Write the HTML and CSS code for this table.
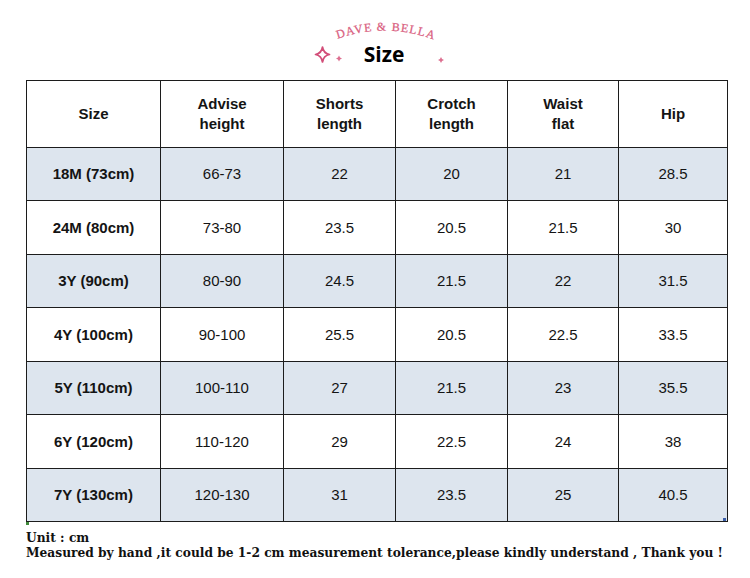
FILE: index.html
```
<!DOCTYPE html>
<html lang="en">
<head>
<meta charset="utf-8">
<title>Size chart</title>
<link rel="stylesheet" href="styles.css">
</head>
<body>
<div class="page">
  <header class="header">
    <svg class="logo" width="150" height="80" viewBox="0 0 150 80" xmlns="http://www.w3.org/2000/svg">
      <defs>
        <path id="arc" d="M 20 42 Q 76 19 134 43"/>
      </defs>
      <text class="brand"><textPath href="#arc" startOffset="50%" text-anchor="middle">DAVE &amp; BELLA</textPath></text>
      <path class="spark" d="M13.5 47 Q14.5 53.5 20.5 54.5 Q14.5 55.5 13.5 62 Q12.5 55.5 6.5 54.5 Q12.5 53.5 13.5 47 Z"/>
      <path class="spark-s" d="M30 55.5 Q30.6 57.9 33 58.5 Q30.6 59.1 30 61.5 Q29.4 59.1 27 58.5 Q29.4 57.9 30 55.5 Z"/>
      <path class="spark-s" d="M132 57 Q132.6 59.4 135 60 Q132.6 60.6 132 63 Q131.4 60.6 129 60 Q131.4 59.4 132 57 Z"/>
      <text class="title" x="75" y="62" text-anchor="middle">Size</text>
    </svg>
  </header>
  <div class="chart-wrap">
    <table class="chart">
      <colgroup>
        <col class="c1"><col class="c2"><col class="c3"><col class="c4"><col class="c5"><col class="c6">
      </colgroup>
      <thead>
        <tr class="head">
          <th>Size</th><th>Advise<br>height</th><th>Shorts<br>length</th><th>Crotch<br>length</th><th>Waist<br>flat</th><th>Hip</th>
        </tr>
      </thead>
      <tbody>
        <tr class="alt"><th>18M (73cm)</th><td>66-73</td><td>22</td><td>20</td><td>21</td><td>28.5</td></tr>
        <tr><th>24M (80cm)</th><td>73-80</td><td>23.5</td><td>20.5</td><td>21.5</td><td>30</td></tr>
        <tr class="alt"><th>3Y (90cm)</th><td>80-90</td><td>24.5</td><td>21.5</td><td>22</td><td>31.5</td></tr>
        <tr><th>4Y (100cm)</th><td>90-100</td><td>25.5</td><td>20.5</td><td>22.5</td><td>33.5</td></tr>
        <tr class="alt"><th>5Y (110cm)</th><td>100-110</td><td>27</td><td>21.5</td><td>23</td><td>35.5</td></tr>
        <tr><th>6Y (120cm)</th><td>110-120</td><td>29</td><td>22.5</td><td>24</td><td>38</td></tr>
        <tr class="alt"><th>7Y (130cm)</th><td>120-130</td><td>31</td><td>23.5</td><td>25</td><td>40.5</td></tr>
      </tbody>
    </table>
    <span class="mark mark-left"></span>
    <span class="mark mark-right"></span>
  </div>
  <div class="notes">
    <p>Unit : cm</p>
    <p>Measured by hand ,it could be 1-2 cm measurement tolerance,please kindly understand , Thank you !</p>
  </div>
</div>
</body>
</html>
```
FILE: styles.css
```
html, body {
  margin: 0;
  padding: 0;
  background: #ffffff;
}
.page {
  width: 750px;
  height: 578px;
  overflow: hidden;
  font-family: "Liberation Sans", Arial, sans-serif;
  color: #141414;
}
.header {
  height: 80px;
  display: flex;
  justify-content: center;
  padding-left: 18px;
}
.logo {
  display: block;
}
.brand {
  font-family: "Liberation Serif", "Times New Roman", serif;
  font-size: 12px;
  letter-spacing: 1.1px;
  fill: #d9607f;
  stroke: #d9607f;
  stroke-width: 0.25;
}
.spark {
  fill: none;
  stroke: #d24d78;
  stroke-width: 1.7;
  stroke-linejoin: round;
}
.spark-s {
  fill: #dd6f90;
}
.title {
  font-family: "Open Sans", "Noto Sans", sans-serif;
  font-weight: 700;
  font-size: 21px;
  fill: #000000;
}
.chart-wrap {
  position: relative;
  margin-left: 26px;
  width: 701px;
}
.chart {
  width: 701px;
  table-layout: fixed;
  border-collapse: collapse;
  border: 1px solid #1c1c1c;
}
.c1 { width: 134px; }
.c2 { width: 123px; }
.c3 { width: 112px; }
.c4 { width: 112px; }
.c5 { width: 111px; }
.c6 { width: 109px; }
.chart th,
.chart td {
  border: 1px solid #1c1c1c;
  text-align: center;
  vertical-align: middle;
  padding: 0;
  font-size: 15px;
  line-height: 20px;
  height: 53px;
}
.chart th {
  font-weight: 700;
}
.chart td {
  font-weight: 400;
}
.chart .head th {
  height: 65px;
  padding-bottom: 1px;
}
.chart .alt th,
.chart .alt td {
  background: #dde5ee;
  height: 52px;
}
.mark {
  position: absolute;
  width: 3px;
  height: 3px;
}
.mark-left {
  left: 0;
  bottom: -3px;
  background: #3f8a3a;
}
.mark-right {
  right: 1px;
  bottom: 1px;
  background: #3b5fa8;
}
.notes {
  margin: 8px 0 0 26px;
  font-family: "DejaVu Serif Condensed", "DejaVu Serif", "Liberation Serif", serif;
  font-stretch: semi-condensed;
  font-weight: 700;
  font-size: 13.6px;
  line-height: 15px;
  white-space: nowrap;
  color: #111111;
}
.notes p {
  margin: 0;
}
```
